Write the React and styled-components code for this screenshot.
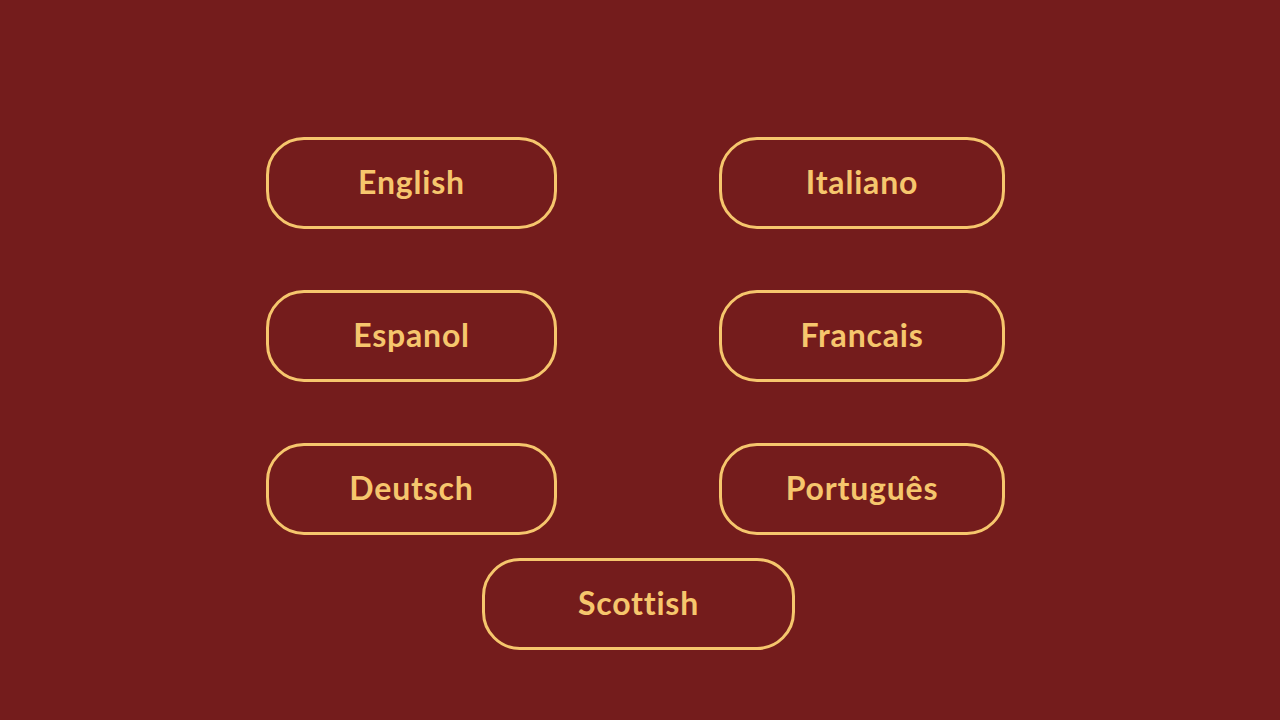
import React from "react";
import styled, { createGlobalStyle } from "styled-components";

const GlobalStyle = createGlobalStyle`
  html, body {
    margin: 0;
    padding: 0;
    background-color: #741c1c;
  }
  body {
    font-family: Lato, "Noto Sans", sans-serif;
  }
`;

const Page = styled.div`
  width: 1280px;
  height: 720px;
  background-color: #741c1c;
  padding-top: 137px;
  box-sizing: border-box;
`;

const Grid = styled.div`
  display: grid;
  grid-template-columns: 291px 286px;
  column-gap: 162px;
  row-gap: 61px;
  margin-left: 266px;
  width: 739px;
`;

const Bottom = styled.div`
  display: flex;
  padding-left: 482px;
  margin-top: 23px;
`;

const LangButton = styled.button`
  display: flex;
  align-items: center;
  justify-content: center;
  width: ${(props) => props.w || "100%"};
  height: 92px;
  box-sizing: border-box;
  border: 3px solid #f6c66d;
  border-radius: 38px;
  background: transparent;
  color: #f6c66d;
  font-family: Lato, "Noto Sans", sans-serif;
  font-weight: 700;
  font-size: 32px;
  letter-spacing: 0.8px;
  padding: 0 0 4px;
  cursor: pointer;
`;

const languages = [
  "English",
  "Italiano",
  "Espanol",
  "Francais",
  "Deutsch",
  "Português",
];

export default function App() {
  return (
    <Page>
      <GlobalStyle />
      <Grid>
        {languages.map((l) => (
          <LangButton key={l}>{l}</LangButton>
        ))}
      </Grid>
      <Bottom>
        <LangButton w="313px">Scottish</LangButton>
      </Bottom>
    </Page>
  );
}
